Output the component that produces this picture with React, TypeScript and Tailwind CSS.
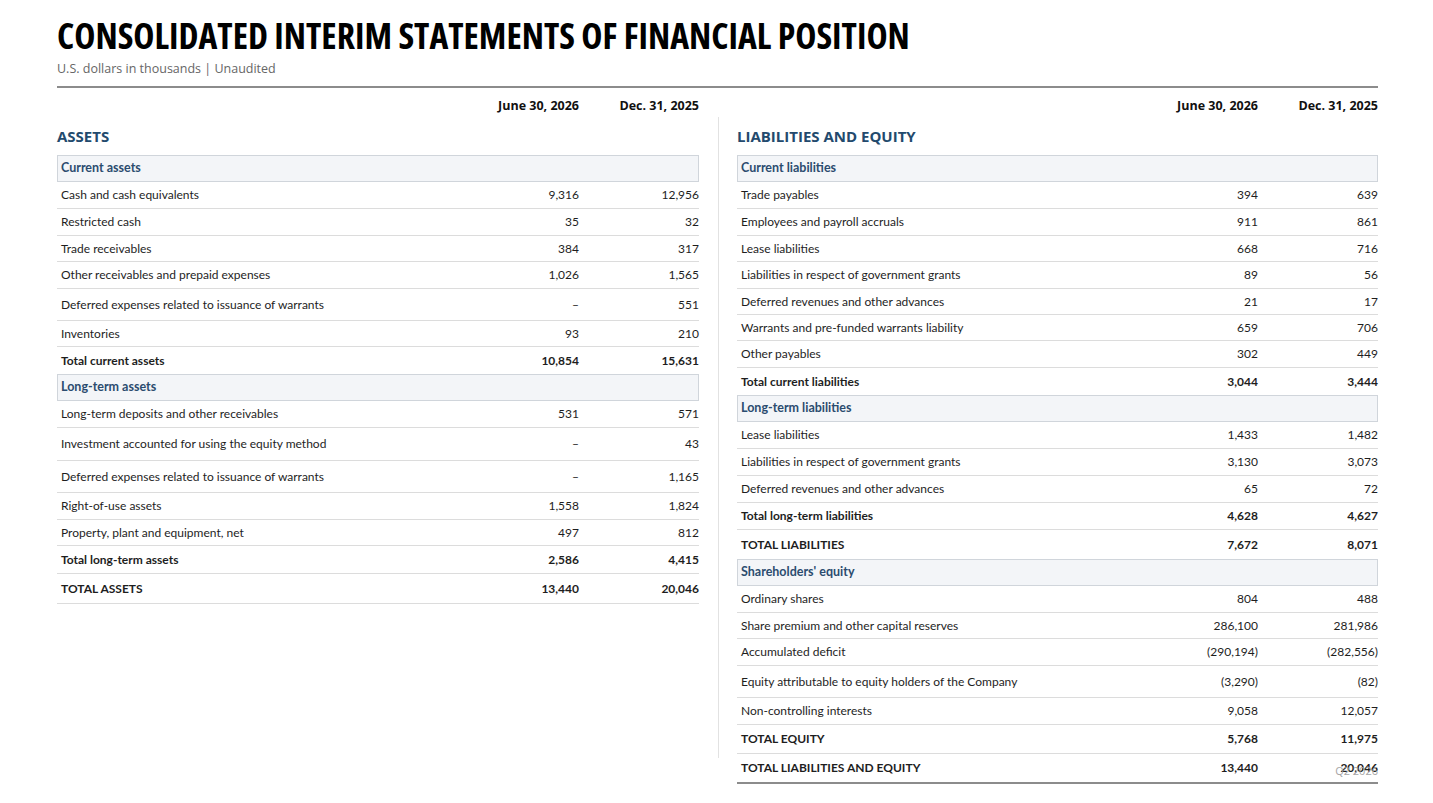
type Row = {
  label: string
  a?: string
  b?: string
  h: number
  kind?: "row" | "total" | "section" | "grand" | "final"
  noLine?: boolean
}

const assets: Row[] = [
  { label: "Current assets", h: 27, kind: "section" },
  { label: "Cash and cash equivalents", a: "9,316", b: "12,956", h: 27 },
  { label: "Restricted cash", a: "35", b: "32", h: 27 },
  { label: "Trade receivables", a: "384", b: "317", h: 26 },
  { label: "Other receivables and prepaid expenses", a: "1,026", b: "1,565", h: 27 },
  { label: "Deferred expenses related to issuance of warrants", a: "–", b: "551", h: 32 },
  { label: "Inventories", a: "93", b: "210", h: 26 },
  { label: "Total current assets", a: "10,854", b: "15,631", h: 27, kind: "total", noLine: true },
  { label: "Long-term assets", h: 27, kind: "section" },
  { label: "Long-term deposits and other receivables", a: "531", b: "571", h: 27 },
  { label: "Investment accounted for using the equity method", a: "–", b: "43", h: 33 },
  { label: "Deferred expenses related to issuance of warrants", a: "–", b: "1,165", h: 32 },
  { label: "Right-of-use assets", a: "1,558", b: "1,824", h: 27 },
  { label: "Property, plant and equipment, net", a: "497", b: "812", h: 26 },
  { label: "Total long-term assets", a: "2,586", b: "4,415", h: 28, kind: "total" },
  { label: "TOTAL ASSETS", a: "13,440", b: "20,046", h: 30, kind: "grand" },
]

const liabilities: Row[] = [
  { label: "Current liabilities", h: 27, kind: "section" },
  { label: "Trade payables", a: "394", b: "639", h: 27 },
  { label: "Employees and payroll accruals", a: "911", b: "861", h: 27 },
  { label: "Lease liabilities", a: "668", b: "716", h: 26 },
  { label: "Liabilities in respect of government grants", a: "89", b: "56", h: 27 },
  { label: "Deferred revenues and other advances", a: "21", b: "17", h: 26 },
  { label: "Warrants and pre-funded warrants liability", a: "659", b: "706", h: 26 },
  { label: "Other payables", a: "302", b: "449", h: 27 },
  { label: "Total current liabilities", a: "3,044", b: "3,444", h: 27, kind: "total", noLine: true },
  { label: "Long-term liabilities", h: 27, kind: "section" },
  { label: "Lease liabilities", a: "1,433", b: "1,482", h: 27 },
  { label: "Liabilities in respect of government grants", a: "3,130", b: "3,073", h: 27 },
  { label: "Deferred revenues and other advances", a: "65", b: "72", h: 27 },
  { label: "Total long-term liabilities", a: "4,628", b: "4,627", h: 27, kind: "total" },
  { label: "TOTAL LIABILITIES", a: "7,672", b: "8,071", h: 29, kind: "grand", noLine: true },
  { label: "Shareholders' equity", h: 27, kind: "section" },
  { label: "Ordinary shares", a: "804", b: "488", h: 27 },
  { label: "Share premium and other capital reserves", a: "286,100", b: "281,986", h: 26 },
  { label: "Accumulated deficit", a: "(290,194)", b: "(282,556)", h: 27 },
  { label: "Equity attributable to equity holders of the Company", a: "(3,290)", b: "(82)", h: 32 },
  { label: "Non-controlling interests", a: "9,058", b: "12,057", h: 27 },
  { label: "TOTAL EQUITY", a: "5,768", b: "11,975", h: 29, kind: "grand" },
  { label: "TOTAL LIABILITIES AND EQUITY", a: "13,440", b: "20,046", h: 30, kind: "final" },
]

function TableRow({ row }: { row: Row }) {
  if (row.kind === "section") {
    return (
      <div
        className="flex items-center border border-[#d0d5db] bg-[#f3f5f8] pl-[3px] text-[12.5px] font-bold text-[#2b4c6f]"
        style={{ height: row.h }}
      >
        {row.label}
      </div>
    )
  }

  const bold = row.kind === "total" || row.kind === "grand" || row.kind === "final"
  const line =
    row.kind === "final"
      ? "border-b-2 border-[#8c8c8c]"
      : row.noLine
        ? ""
        : "border-b border-[#dcdcdc]"

  return (
    <div
      className={`flex items-center text-[12px] text-[#1e1e1e] ${bold ? "font-bold" : ""} ${line}`}
      style={{ height: row.h }}
    >
      <div className="flex-1 pl-[4px]">{row.label}</div>
      <div className="w-[120px] text-right">{row.a}</div>
      <div className="w-[120px] text-right">{row.b}</div>
    </div>
  )
}

function Panel({ title, rows, width }: { title: string; rows: Row[]; width: string }) {
  return (
    <div className={`${width} shrink-0`}>
      <div className="mt-[8px] flex h-[20px] items-center justify-end font-['Open_Sans',sans-serif] text-[12.5px] font-bold leading-[20px] text-[#111]">
        <div className="w-[120px] text-right">June 30, 2026</div>
        <div className="w-[120px] text-right">Dec. 31, 2025</div>
      </div>
      <h2 className="mb-[9px] mt-[10px] h-[20px] font-['Open_Sans',sans-serif] text-[15px] font-bold leading-[20px] text-[#234a6d]">
        {title}
      </h2>
      {rows.map((row, i) => (
        <TableRow key={i} row={row} />
      ))}
    </div>
  )
}

export default function App() {
  return (
    <div className="relative h-[803px] w-[1433px] overflow-hidden bg-white pl-[57px] pr-[55px] font-['Lato',sans-serif]">
      <h1 className="pt-[18px] font-['Open_Sans',sans-serif] text-[35.75px] font-bold leading-[35px] text-black [font-stretch:75%]">
        CONSOLIDATED INTERIM STATEMENTS OF FINANCIAL POSITION
      </h1>
      <div className="mt-[8px] h-[16px] font-['Open_Sans',sans-serif] text-[12.5px] leading-[16px] text-[#666]">
        U.S. dollars in thousands | Unaudited
      </div>
      <div className="mt-[9px] h-[2px] bg-[#8c8c8c]" />

      <div className="flex">
        <Panel title="ASSETS" rows={assets} width="w-[642px]" />
        <div className="flex w-[38px] shrink-0 justify-center">
          <div className="mt-[29px] h-[641px] w-px bg-[#e2e2e2]" />
        </div>
        <Panel title="LIABILITIES AND EQUITY" rows={liabilities} width="w-[641px]" />
      </div>

      <div className="absolute bottom-[24px] right-[55px] font-['Open_Sans',sans-serif] text-[11px] text-[#a5a5a5]">
        Q2 2026
      </div>
    </div>
  )
}
